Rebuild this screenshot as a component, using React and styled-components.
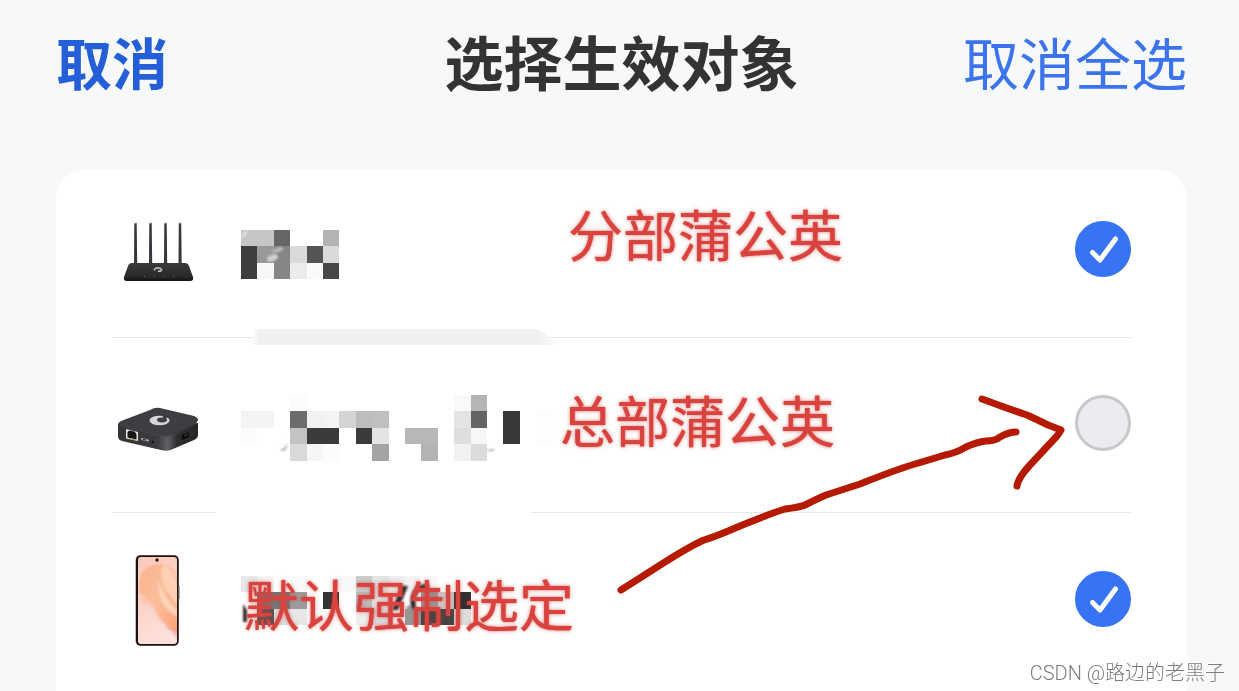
import { useState } from 'react';
import styled, { createGlobalStyle } from 'styled-components';

const devices = [
    {
        id: 'branch',
        label: '分部蒲公英',
        icon: 'router',
        checked: true,
        noteLeft: 512,
        noteTop: 27,
        mosaicTop: 31,
        cells: [
            ['#c6c6c6', '#c6c6c6', '#666666', '', '', '#b3b3b3'],
            ['#3f3f3f', '#999999', '#858585', '#dadada', '#545454', '#dadada'],
            ['#3f3f3f', '#f8f8f8', '#868686', '#ebebeb', '#fafafa', '#484848'],
        ],
    },
    {
        id: 'head',
        label: '总部蒲公英',
        icon: 'box',
        checked: false,
        noteLeft: 504,
        noteTop: 213,
        mosaicTop: 22,
        cells: [
            ['', '', '', '#fcfcfc', '', '', '', '', '', '', '', '', '', '#f9f9f9', '#b5b5b5'],
            ['#f4f4f4', '#f4f4f4', '', '#6c6c6c', '#f1f1f1', '#f3f3f3', '#d4d4d4', '#bdbdbd', '#bfbfbf', '', '', '', '', '#e4e4e4', '#646464', '', '#383838', '', '#fdfdfd'],
            ['#fcfcfc', '', '', '#c3c3c3', '#3b3b3b', '#3b3b3b', '', '#3b3b3b', '#e4e4e4', '', '#b7b7b7', '#b7b7b7', '', '#dedede', '#f7f7f7', '', '#383838', '', '#fdfdfd'],
            ['', '', '', '#d9d9d9', '#f6f6f6', '#fcfcfc', '', '', '#a4a4a4', '', '', '#b3b3b3', '', '#f1f1f1', '#dcdcdc'],
        ],
    },
    {
        id: 'phone',
        label: '默认强制选定',
        icon: 'phone',
        checked: true,
        noteLeft: 188,
        noteTop: 397,
        mosaicTop: 27,
        cells: [
            ['#e8e8e8', '#f4f4f4', '', '#fafafa', '', '#fdfdfd', '#f8f8f8', '#cccccc', '#e4e4e4', '#eeeeee', '#f4f4f4', '#fafafa'],
            ['', '#777777', '#777777', '#9c9c9c', '', '#333333', '', '#bdbdbd', '#e4e4e4', '', '', '#999999', '#cccccc', '#303030'],
            ['', '#555555', '#dddddd', '#e8e8e8', '', '', '', '#eeeeee', '#dddddd', '', '#999999', '#444444', '#444444', '#dddddd'],
        ],
    },
];

const CELL = 16.4;

// what is left of the strokes under the censored names
const Remains = ({ id }) => {
    if (id === 'branch') {
        return (
            <g stroke="#cfcfcf" strokeLinecap="round" filter="url(#soft)">
                <path d="M29 60l5-2" strokeWidth="6" />
                <path d="M34 52l6-2" strokeWidth="4" opacity="0.7" />
                <path d="M2 37l3-4" strokeWidth="2" stroke="#eeeeee" />
            </g>
        );
    }
    if (id === 'head') {
        return (
            <g fill="#a5a5a5" filter="url(#soft)">
                <path d="M40 76c4 0 6-3 6-9v5c0 4-2 6-6 6z" />
                <path d="M246 77l7-1v2h-7z" />
            </g>
        );
    }
    return (
        <g filter="url(#soft)">
            <path d="M2 55v18h4v-12z" fill="#333" />
            <path d="M160 37h7l-10 24h-6z" fill="#262626" />
            <path d="M188 37c-15 1-18 10-15 24" fill="none" stroke="#262626" strokeWidth="5" />
            <path d="M167 57l8 14" stroke="#999" strokeWidth="5" />
        </g>
    );
};

const Mosaic = ({ id, cells, top }) => (
    <svg width="330" height="100" viewBox="0 0 330 100" aria-hidden="true">
        <defs>
            <filter id="soft">
                <feGaussianBlur stdDeviation="0.8" />
            </filter>
        </defs>
        {cells.map((line, r) =>
            line.map((color, c) => {
                if (!color) return null;
                const x = Math.round(c * CELL);
                const y = Math.round(r * CELL);
                return (
                    <rect
                        key={`${r}-${c}`}
                        x={x}
                        y={y + top}
                        width={Math.round((c + 1) * CELL) - x}
                        height={Math.round((r + 1) * CELL) - y}
                        fill={color}
                    />
                );
            })
        )}
        <Remains id={id} />
    </svg>
);

const RouterIcon = () => (
    <svg width="93" height="100" viewBox="0 0 93 100" aria-hidden="true">
        <defs>
            <linearGradient id="routerBody" x1="0" y1="0" x2="0" y2="1">
                <stop offset="0" stopColor="#3a3a3b" />
                <stop offset="0.7" stopColor="#2b2b2c" />
                <stop offset="1" stopColor="#171717" />
            </linearGradient>
        </defs>
        {[23.5, 38.5, 53.5, 68].map((x) => (
            <g key={x}>
                <path d={`M${x - 1.2} 25h2.4l0.5 40h-3.2z`} fill="#34373c" />
                <path d={`M${x - 1.2} 24.5h2.6`} stroke="#777" strokeWidth="1.4" />
            </g>
        ))}
        <path d="M20 64h53q3 0 4 3l4 11q1 4-3 4H15q-4 0-3-4l4-11q1-3 4-3z" fill="url(#routerBody)" />
        <path d="M14 80.5h65" stroke="#1a1a1a" strokeWidth="2" />
        <path d="M42.500 71.500c-1-3 6-3.500 7-1 0.500 1.500-1.500 2-3.500 1.500" fill="none" stroke="#c9c9c9" strokeWidth="1.500" />
        <path d="M32 77.5h1M42 77.5h1M52 77.5h1M61 77.5h1" stroke="#6a6a6a" strokeWidth="1" />
    </svg>
);

const BoxIcon = () => (
    <svg width="93" height="100" viewBox="0 0 93 100" aria-hidden="true">
        <defs>
            <linearGradient id="boxSide" x1="0" y1="0" x2="1" y2="0">
                <stop offset="0" stopColor="#333436" />
                <stop offset="0.5" stopColor="#3c3d40" />
                <stop offset="0.62" stopColor="#606164" />
                <stop offset="0.74" stopColor="#2c2d2f" />
                <stop offset="1" stopColor="#252628" />
            </linearGradient>
        </defs>
        <path d="M6 51v12q0 4 4 5l39 9q7 2 12-1l21-9q4-2 4-5V50z" fill="url(#boxSide)" />
        <path d="M9 48l29-11q5-3 10-2l34 8q7 3 2 7l-22 11q-6 3-13 1L10 54q-7-3-1-6z" fill="#3d3e41" />
        <path d="M7 52l42 11q7 2 13-1l23-12" fill="none" stroke="#48494c" strokeWidth="0.8" />
        <ellipse cx="47.5" cy="47.5" rx="10" ry="4.8" fill="#d4d5d6" />
        <ellipse cx="50" cy="47" rx="5" ry="2.4" fill="#3d3e41" />
        <path d="M50 42l7 2-5 2z" fill="#3d3e41" />
        <path d="M14 56l12 3v9l-12-2.500z" fill="#e6e6e6" />
        <path d="M15.500 59l2-1.500 5 1 2 2.500v5.500l-9-2z" fill="#161616" />
        <path d="M17 65.500l7 1.500" stroke="#b79a55" strokeWidth="0.9" />
        <path d="M30 66l6 1.500" stroke="#a4a4a4" strokeWidth="2" strokeLinecap="round" />
        <path d="M31 66.300l3 0.700" stroke="#222" strokeWidth="1" />
        <circle cx="40.500" cy="69" r="1.200" fill="#0e0e0e" />
        <path d="M70 62l7-3v5l-7 3z" fill="#0c0c0d" />
        <path d="M72 63l4-1.600" stroke="#555" strokeWidth="0.8" />
    </svg>
);

const PhoneIcon = () => (
    <svg width="93" height="100" viewBox="0 0 93 100" aria-hidden="true">
        <defs>
            <linearGradient id="screen" x1="0" y1="0" x2="0.3" y2="1">
                <stop offset="0" stopColor="#fdc9bb" />
                <stop offset="0.5" stopColor="#fbd2c6" />
                <stop offset="1" stopColor="#fde0da" />
            </linearGradient>
            <linearGradient id="petal" x1="0" y1="0" x2="1" y2="1">
                <stop offset="0" stopColor="#fcb28e" />
                <stop offset="0.5" stopColor="#fdbe9c" />
                <stop offset="1" stopColor="#f9a074" />
            </linearGradient>
            <clipPath id="screenClip">
                <rect x="26" y="8" width="39" height="87" rx="3" />
            </clipPath>
            <filter id="petalBlur">
                <feGaussianBlur stdDeviation="0.8" />
            </filter>
        </defs>
        <rect x="23.500" y="6" width="43.500" height="91" rx="5" fill="#9a7d78" />
        <rect x="24" y="6.500" width="42.500" height="90" rx="4.500" fill="#171314" />
        <rect x="66" y="37" width="1.500" height="13" fill="#6b5754" />
        <g clipPath="url(#screenClip)">
            <rect x="26" y="8" width="39" height="87" fill="url(#screen)" />
            <g filter="url(#petalBlur)">
                <path d="M30 24c5-9 20-11 28-7 6 4 8 14 9 27v41c-8-2-17-8-22-18-3-5-4-9-9-11-7-3-9-8-9-14 0-7 0-12 3-18z" fill="url(#petal)" />
                <path d="M52 15c8 4 13 16 15 29v18c-4-12-13-18-16-29-2-6-3-13 1-18z" fill="#fed3b8" opacity="0.9" />
                <path d="M45 31c2 14 4 22 10 29 4 5 8 6 12 9v-6c-6-7-13-13-16-20-2-4-3-8-6-12z" fill="#fddcc4" opacity="0.8" />
                <path d="M28 45c5 9 12 8 15 18 5 12 15 15 22 25" fill="none" stroke="#fbd0c4" strokeWidth="2" />
                <path d="M55 78c4 2 8 6 11 11" stroke="#e8a3b5" strokeWidth="2" fill="none" opacity="0.6" />
            </g>
        </g>
        <circle cx="45" cy="11" r="1.700" fill="#241a1a" />
    </svg>
);

const icons = {
    router: RouterIcon,
    box: BoxIcon,
    phone: PhoneIcon,
};

// grey smear and rubbed out pieces of the divider lines
const Scratches = () => (
    <ScratchLayer width="480" height="360" viewBox="0 0 480 360" aria-hidden="true">
        <defs>
            <linearGradient id="smear" x1="0" y1="0" x2="1" y2="0">
                <stop offset="0" stopColor="#ffffff" />
                <stop offset="0.03" stopColor="#f0f0f0" />
                <stop offset="0.93" stopColor="#f0f0f0" />
                <stop offset="1" stopColor="#f8f8f8" />
            </linearGradient>
        </defs>
        <path d="M142 159h280q7 1 13 6l9 10H139z" fill="url(#smear)" />
        <path d="M104 342h315" stroke="#ffffff" strokeWidth="3" />
    </ScratchLayer>
);

const App = () => {
    const [selected, setSelected] = useState(devices.filter((d) => d.checked).map((d) => d.id));

    const toggle = (id) => {
        setSelected(selected.includes(id) ? selected.filter((s) => s !== id) : [...selected, id]);
    };

    return (
        <>
            <GlobalStyle />
            <Page>
                <Header>
                    <CancelButton type="button">取消</CancelButton>
                    <Title>选择生效对象</Title>
                    <ClearButton type="button" onClick={() => setSelected([])}>取消全选</ClearButton>
                </Header>
                <Card>
                    {devices.map((device) => {
                        const Icon = icons[device.icon];
                        return (
                            <Row key={device.id}>
                                <Icon />
                                <Name>
                                    <Mosaic id={device.id} cells={device.cells} top={device.mosaicTop} />
                                </Name>
                                <CheckWrapper>
                                    <Checkbox
                                        type="checkbox"
                                        id={device.id}
                                        checked={selected.includes(device.id)}
                                        onChange={() => toggle(device.id)}
                                    />
                                    {selected.includes(device.id) && (
                                        <Tick width="56" height="56" viewBox="0 0 56 56" aria-hidden="true">
                                            <path d="M17.500 31.500l7.500 7.500L40.500 18" fill="none" stroke="#fff" strokeWidth="5" strokeLinecap="round" strokeLinejoin="round" />
                                        </Tick>
                                    )}
                                </CheckWrapper>
                            </Row>
                        );
                    })}
                    <Scratches />
                    {devices.map((device) => (
                        <Note key={device.id} htmlFor={device.id} $left={device.noteLeft} $top={device.noteTop}>
                            {device.label}
                        </Note>
                    ))}
                    <Arrow width="460" height="210" viewBox="0 0 460 210" aria-hidden="true">
                        <g fill="none" stroke="#b51a00" strokeWidth="7" strokeLinecap="round" strokeLinejoin="round">
                            <path d="M11 200L44 179Q78 157 94 150C108 146 120 140 135 134Q162 123 175 119C184 118 190 117 195 115Q209 108 216 105L250 94Q285 80 305 74Q322 69 335 65Q346 63 356 57Q367 52 376 51Q385 51 390 47Q399 42 406 42" />
                            <path d="M372 9Q396 18 417 25Q432 32 438 35Q446 38 451 40Q450 42 447 46L420 75Q408 88 407 96" />
                        </g>
                    </Arrow>
                </Card>
                <Watermark>CSDN @路边的老黑子</Watermark>
            </Page>
        </>
    );
};

export default App;

const GlobalStyle = createGlobalStyle`
    * {
        box-sizing: border-box;
    }
    body {
        margin: 0;
        background: #f6f8fa;
        font-family: "Noto Sans CJK SC", sans-serif;
    }
    svg {
        display: block;
    }
`

const Page = styled.div`
    min-height: 100vh;
    padding: 0 52px 0 56px;
    display: flex;
    flex-direction: column;
`

const Header = styled.header`
    display: grid;
    grid-template-columns: 1fr auto 1fr;
    align-items: center;
    padding: 21px 0 69px;
`

const Title = styled.h1`
    margin: 0;
    font-size: 59px;
    line-height: 80px;
    font-weight: 700;
    color: #333333;
`

const TextButton = styled.button`
    border: none;
    background: none;
    padding: 0;
    font-family: inherit;
    font-size: 56px;
    line-height: 80px;
    cursor: pointer;
`

const CancelButton = styled(TextButton)`
    justify-self: start;
    font-weight: 700;
    color: #245fd8;
`

const ClearButton = styled(TextButton)`
    justify-self: end;
    font-weight: 400;
    color: #3b74ec;
`

const Card = styled.main`
    position: relative;
    flex: 1;
    background: #ffffff;
    border-radius: 28px 28px 0 0;
    padding: 0 56px;
`

const Row = styled.div`
    height: 175px;
    display: flex;
    align-items: center;
    gap: 36px;
    padding-bottom: 4px;
    border-bottom: 1px solid #e6e6e6;

    &:first-child {
        height: 168px;
        padding-bottom: 9px;
    }

    &:nth-child(3) {
        border-bottom: none;
    }
`

const Name = styled.div`
    flex: 1;
    min-width: 0;
`

const CheckWrapper = styled.div`
    position: relative;
    width: 56px;
    height: 56px;
`

const Checkbox = styled.input`
    appearance: none;
    display: block;
    width: 56px;
    height: 56px;
    margin: 0;
    border: 3px solid #c7c8cc;
    border-radius: 50%;
    background: #ebecf0;
    cursor: pointer;

    &:checked {
        border-color: #3773f5;
        background: #3773f5;
    }
`

const Tick = styled.svg`
    position: absolute;
    inset: 0;
    pointer-events: none;
`

const ScratchLayer = styled.svg`
    position: absolute;
    left: 56px;
    top: 0;
    pointer-events: none;
`

const Note = styled.label`
    position: absolute;
    left: ${(props) => props.$left}px;
    top: ${(props) => props.$top}px;
    font-size: 55px;
    line-height: 70px;
    font-weight: 400;
    white-space: nowrap;
    color: #d9423d;
    text-shadow: 0 0 1px #d9423d, 0 0 4px rgba(190, 60, 55, 0.6);
`

const Arrow = styled.svg`
    position: absolute;
    top: 220px;
    right: 117px;
    pointer-events: none;
`

const Watermark = styled.div`
    position: fixed;
    right: 14px;
    bottom: 3px;
    font-family: Roboto, "Noto Sans CJK SC", sans-serif;
    font-size: 20px;
    line-height: 30px;
    font-weight: 300;
    color: #7d7d7d;
    text-shadow: -1px -1px 0 rgba(255, 255, 255, 0.8);
`
